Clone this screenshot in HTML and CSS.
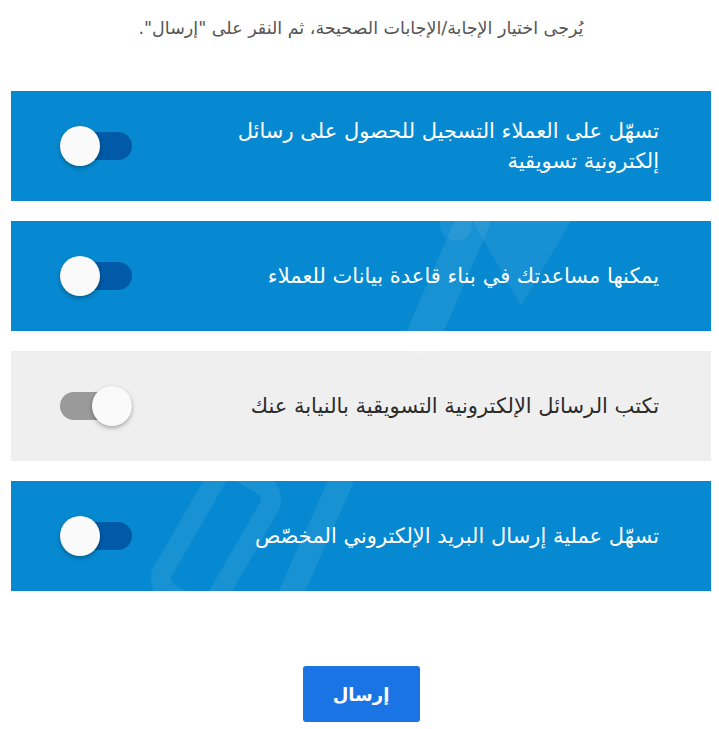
FILE: index.html
```html
<!DOCTYPE html>
<html lang="ar" dir="rtl">
<head>
    <meta charset="UTF-8">
    <meta name="viewport" content="width=device-width, initial-scale=1.0">
    <title>اختبار</title>
    <link rel="stylesheet" href="styles.css">
</head>
<body>
    <div class="quiz">
        <p class="hint">يُرجى اختيار الإجابة/الإجابات الصحيحة، ثم النقر على "إرسال".</p>

        <div class="options">
            <!-- علامة مائية باهتة فوق البطاقات -->
            <svg class="watermark" width="700" height="500" viewBox="0 0 700 500">
                <g fill="none" stroke="#ffffff" stroke-opacity="0.08" stroke-linecap="round" stroke-linejoin="round">
                    <rect x="-70" y="-30" width="140" height="60" rx="16" stroke-width="20" transform="translate(205 448) rotate(-60)"/>
                    <path d="M272 520 L330 390" stroke-width="24"/>
                    <path d="M410 250 L462 130" stroke-width="34"/>
                </g>
                <g fill="#ffffff" fill-opacity="0.07">
                    <polygon points="462,130 560,130 510,215"/>
                    <circle cx="445" cy="134" r="16"/>
                </g>
            </svg>

            <div class="option">
                <div class="option-text">تسهّل على العملاء التسجيل للحصول على رسائل إلكترونية تسويقية</div>
                <span class="switch"><span class="track"></span><span class="knob"></span></span>
            </div>

            <div class="option">
                <div class="option-text">يمكنها مساعدتك في بناء قاعدة بيانات للعملاء</div>
                <span class="switch"><span class="track"></span><span class="knob"></span></span>
            </div>

            <div class="option option-off">
                <div class="option-text">تكتب الرسائل الإلكترونية التسويقية بالنيابة عنك</div>
                <span class="switch switch-on"><span class="track"></span><span class="knob"></span></span>
            </div>

            <div class="option">
                <div class="option-text">تسهّل عملية إرسال البريد الإلكتروني المخصّص</div>
                <span class="switch"><span class="track"></span><span class="knob"></span></span>
            </div>
        </div>

        <div class="actions">
            <button class="btn-submit">إرسال</button>
        </div>
    </div>
</body>
</html>
```

FILE: styles.css
```css
* {
    margin: 0;
    padding: 0;
    box-sizing: border-box;
}

body {
    margin: 8px;
    font-family: 'DejaVu Sans', 'Noto Sans', sans-serif;
    background: #ffffff;
}

.quiz {
    max-width: 700px;
}

.hint {
    padding-top: 8px;
    line-height: 24px;
    font-size: 17.5px;
    color: #555555;
    text-align: center;
    margin-bottom: 51px;
}

.options {
    position: relative;
    display: flex;
    flex-direction: column;
    gap: 20px;
}

.watermark {
    position: absolute;
    left: 0;
    top: 0;
    pointer-events: none;
    z-index: 1;
}

.option {
    display: flex;
    align-items: center;
    justify-content: space-between;
    height: 110px;
    padding: 0 52px 0 49px;
    background: #0689d0;
    color: #ffffff;
}

.option-off {
    background: #efefef;
    color: #2b2b2b;
}

.option-text {
    font-size: 21px;
    line-height: 30px;
    max-width: 470px;
}

.switch {
    position: relative;
    display: block;
    width: 72px;
    height: 40px;
    flex-shrink: 0;
    z-index: 2;
}

.track {
    display: block;
    width: 72px;
    height: 28px;
    margin-top: 6px;
    border-radius: 14px;
    background: #005aa7;
}

.knob {
    position: absolute;
    top: 0;
    left: 0;
    width: 40px;
    height: 40px;
    border-radius: 50%;
    background: #fafafa;
    box-shadow: 0 2px 4px rgba(0, 0, 0, 0.3);
}

.switch-on .track {
    background: #9a9a9a;
}

.switch-on .knob {
    left: auto;
    right: 0;
}

.actions {
    display: flex;
    justify-content: center;
    margin-top: 75px;
}

.btn-submit {
    width: 117px;
    height: 56px;
    border: none;
    border-radius: 3px;
    background: #1b74e4;
    color: #ffffff;
    font-family: 'DejaVu Sans', sans-serif;
    font-size: 18px;
    font-weight: bold;
    cursor: pointer;
}
```
